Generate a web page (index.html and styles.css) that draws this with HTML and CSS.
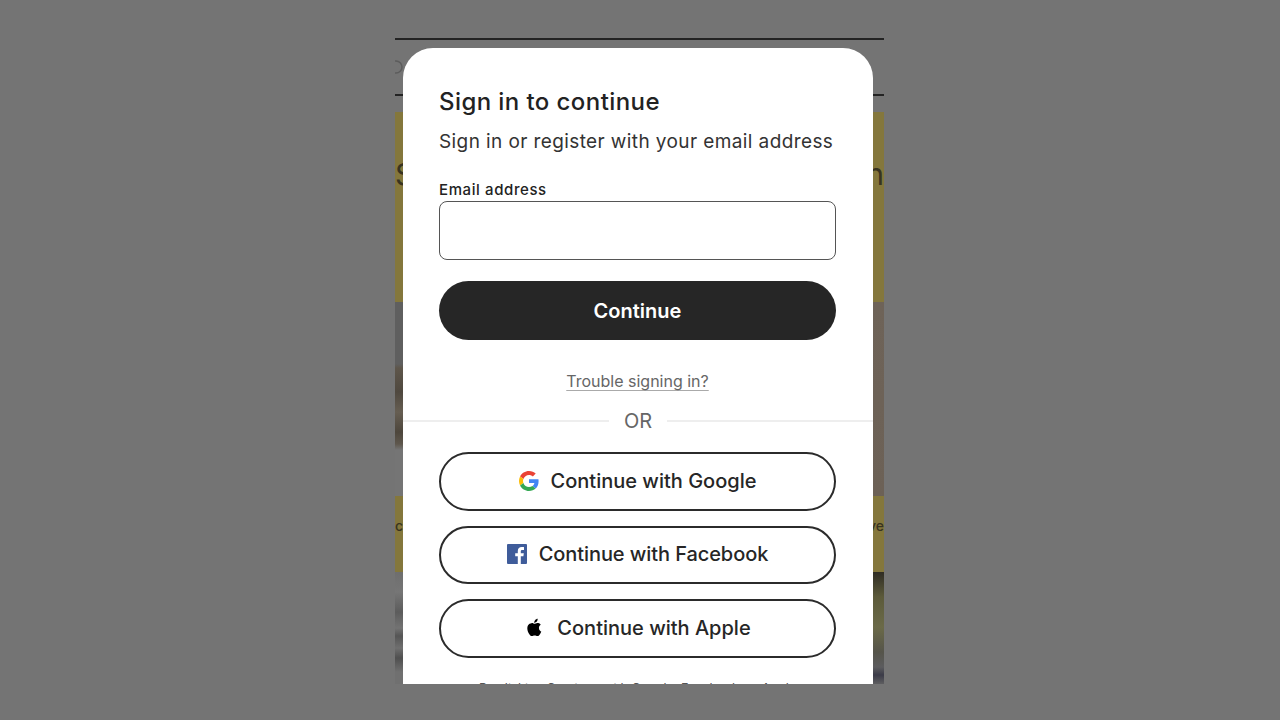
FILE: index.html
```html
<!DOCTYPE html>
<html lang="en">
  <head>
    <meta charset="UTF-8" />
    <title>Sign in to continue</title>
    <link rel="stylesheet" href="styles.css">
  </head>
  <body>
    <div class="phone">
      <div class="page">
        <div class="search-bar">
          <svg class="search-icon" viewBox="0 0 16 16" width="16" height="16">
            <circle cx="7" cy="7" r="6" fill="none" stroke="#5c5c5c" stroke-width="1.500"/>
          </svg>
        </div>
        <div class="band band-top"><span>S</span><span>h</span></div>
        <div class="photo photo-one"></div>
        <div class="band band-mid"><span>c</span><span>ve</span></div>
        <div class="photo photo-two"></div>
      </div>

      <div class="modal">
        <h1>Sign in to continue</h1>
        <p class="intro">Sign in or register with your email address</p>
        <label class="email-label" for="email">Email address</label>
        <input class="email-input" id="email" type="text">
        <button class="button button-dark">Continue</button>
        <a class="trouble" href="#">Trouble signing in?</a>
        <div class="divider"><span>OR</span></div>
        <button class="button button-outline">
          <svg class="icon" viewBox="0 0 48 48" width="20" height="20">
            <path fill="#EA4335" d="M24 9.500c3.500 0 6.700 1.200 9.200 3.600l6.900-6.900C35.900 2.400 30.500 0 24 0 14.600 0 6.500 5.400 2.600 13.200l8 6.200C12.500 13.600 17.800 9.500 24 9.500z"/>
            <path fill="#4285F4" d="M47 24.500c0-1.600-.1-3.100-.4-4.500H24v9h12.900c-.6 3-2.200 5.500-4.700 7.200l7.700 6C44.400 38.100 47 31.900 47 24.500z"/>
            <path fill="#FBBC05" d="M10.500 28.600c-.5-1.400-.8-3-.8-4.600s.3-3.200.8-4.600l-8-6.200C.9 16.500 0 20.100 0 24s.9 7.500 2.600 10.800l7.900-6.200z"/>
            <path fill="#34A853" d="M24 48c6.500 0 11.900-2.100 15.900-5.800l-7.700-6c-2.200 1.400-4.900 2.300-8.200 2.300-6.200 0-11.500-4.200-13.400-9.900l-8 6.200C6.500 42.600 14.600 48 24 48z"/>
          </svg>
          Continue with Google
        </button>
        <button class="button button-outline button-facebook">
          <svg class="icon" viewBox="0 0 20 20" width="20" height="20">
            <rect width="20" height="20" rx="1" fill="#3F5C9A"/>
            <path fill="#fff" d="M13.800 20v-7.700h2.600l.4-3h-3V7.400c0-.9.2-1.500 1.500-1.500H17V3.200c-.3 0-1.200-.1-2.300-.1-2.300 0-3.900 1.400-3.900 4v2.200H8.200v3h2.600V20z"/>
          </svg>
          Continue with Facebook
        </button>
        <button class="button button-outline">
          <svg class="icon" viewBox="0 0 24 24" width="21" height="21">
            <path fill="#000" d="M17.050 12.500c0-2.400 2-3.600 2.100-3.650-1.150-1.650-2.900-1.900-3.550-1.900-1.500-.15-2.950.9-3.700.9-.8 0-1.950-.9-3.200-.85-1.650 0-3.200.95-4.050 2.450-1.750 3-.45 7.450 1.250 9.900.85 1.200 1.800 2.550 3.100 2.500 1.250-.05 1.700-.8 3.200-.8s1.900.8 3.200.75c1.350 0 2.200-1.200 3-2.400.95-1.400 1.350-2.750 1.350-2.800-.05 0-2.700-1-2.700-4.100zM14.600 5.250c.65-.85 1.150-2 1-3.150-1 .05-2.200.65-2.900 1.500-.6.75-1.200 1.900-1.050 3.050 1.100.05 2.250-.6 2.950-1.400z"/>
          </svg>
          Continue with Apple
        </button>
        <p class="legal">By clicking Continue with Google, Facebook, or Apple</p>
      </div>
    </div>
  </body>
</html>
```

FILE: styles.css
```css
* {
    margin: 0;
    padding: 0;
    box-sizing: border-box;
}

body, html {
    height: 100%;
    background-color: #747474;
    font-family: Inter, 'Liberation Sans', sans-serif;
    color: #222;
    overflow: hidden;
}

.phone {
    position: relative;
    width: 489px;
    height: 684px;
    margin-left: 395px;
    overflow: hidden;
}

.page {
    display: flex;
    flex-direction: column;
    height: 100%;
    padding-top: 38px;
}

.search-bar {
    height: 58px;
    margin-bottom: 16px;
    border-top: 2px solid #232323;
    border-bottom: 2px solid #232323;
    padding-top: 20px;
}

.search-icon {
    display: block;
    margin-left: -6px;
}

.band {
    display: flex;
    justify-content: space-between;
    background-color: #84773c;
    color: #383320;
}

.band-top {
    height: 190px;
    padding-top: 44px;
    font-size: 30px;
    line-height: 36px;
}

.band-mid {
    height: 76px;
    padding-top: 21px;
    font-size: 14px;
    line-height: 18px;
    font-weight: 500;
}

/* only the strips either side of the modal are ever visible */
.photo {
    background-repeat: no-repeat;
    background-size: 8px 100%, 12px 100%;
    background-position: left top, right top;
}

.photo-one {
    height: 194px;
    background-image:
        linear-gradient(#5f5f5f 0, #5f5f5f 62px, #5e564b 66px, #4f483f 90px, #665e52 110px, #4d463c 130px, #5e574d 142px, #757575 148px),
        linear-gradient(#6e6358 0, #6c6156 100%);
}

.photo-two {
    flex: 1;
    background-image:
        linear-gradient(#6e6e6e 0, #767676 20px, #5c5c5c 40px, #737373 56px, #555 64px, #6f6f6f 76px, #4f4f4f 86px, #707070 100px),
        linear-gradient(#2f2c24 0, #5c5a3a 25px, #6b6a48 55px, #55544a 80px, #5c5c5e 95px, #3b3b48 103px, #5e5e60 112px);
}

.modal {
    position: absolute;
    left: 8px;
    top: 48px;
    width: 470px;
    height: 636px;
    padding: 39px 37px 0 36px;
    background-color: #fff;
    border-radius: 30px 30px 0 0;
    overflow: hidden;
}

h1 {
    font-size: 24px;
    line-height: 30px;
    font-weight: 500;
    letter-spacing: 0.42px;
}

.intro {
    margin-top: 12px;
    font-size: 19px;
    line-height: 26px;
    letter-spacing: 0.4px;
    color: #333;
}

.email-label {
    display: block;
    margin-top: 25px;
    font-size: 15px;
    line-height: 20px;
    font-weight: 500;
    letter-spacing: 0.6px;
}

.email-input {
    display: block;
    width: 100%;
    height: 59px;
    margin-top: 1px;
    border: 1px solid #555;
    border-radius: 8px;
}

.button {
    display: flex;
    justify-content: center;
    align-items: center;
    gap: 12px;
    width: 100%;
    height: 59px;
    border-radius: 30px;
    font-family: inherit;
    font-size: 20px;
    font-weight: 500;
}

.button-dark {
    margin-top: 21px;
    border: none;
    background-color: #262626;
    color: #fff;
    font-weight: 600;
}

.button-outline {
    height: 58.5px;
    margin-bottom: 15px;
    padding-bottom: 1px;
    border: 2px solid #2b2b2b;
    background-color: #fff;
    color: #262626;
}

.button-facebook {
    letter-spacing: -0.08px;
}

.trouble {
    display: block;
    margin-top: 31px;
    text-align: center;
    font-size: 16px;
    line-height: 20px;
    color: #666;
    text-decoration: underline;
    text-decoration-color: #aaa;
    text-decoration-thickness: 1px;
    text-underline-offset: 3px;
}

.divider {
    display: flex;
    align-items: center;
    gap: 15px;
    margin: 16px -37px 17px -36px;
    font-size: 20px;
    line-height: 28px;
    color: #666;
}

.divider::before, .divider::after {
    content: "";
    flex: 1;
    height: 1.500px;
    background-color: #eee;
}

.icon {
    flex-shrink: 0;
}

.legal {
    margin-top: 21px;
    text-align: center;
    font-size: 12.500px;
    line-height: 20px;
    color: #555;
}
```
